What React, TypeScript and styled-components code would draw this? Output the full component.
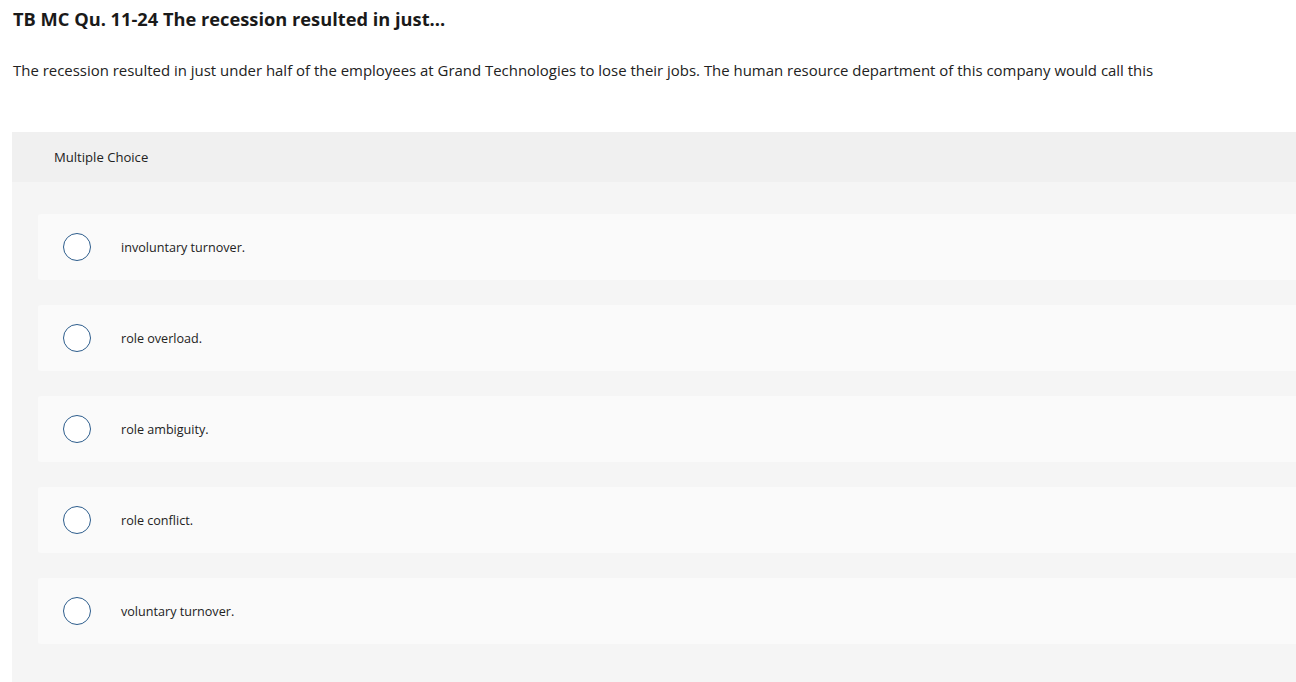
import React from 'react';
import styled, { createGlobalStyle } from 'styled-components';

const GlobalStyle = createGlobalStyle`
  html, body {
    margin: 0;
    padding: 0;
    background: #ffffff;
    overflow: hidden;
  }
  body {
    font-family: "Open Sans", Lato, Arial, sans-serif;
    color: #1e1e1e;
  }
`;

const Page = styled.div`
  width: 1296px;
  height: 682px;
  overflow: hidden;
  padding-left: 12px;
  box-sizing: border-box;
`;

const Title = styled.h1`
  margin: 0;
  padding: 8px 0 0 1px;
  font-size: 18.25px;
  line-height: 22px;
  font-weight: 700;
  color: #1a1a1a;
`;

const Prompt = styled.p`
  margin: 0;
  padding: 30px 0 0 1px;
  font-size: 14.95px;
  line-height: 20px;
  color: #222222;
`;

const Panel = styled.section`
  margin-top: 52px;
  width: 1400px;
`;

const PanelHeader = styled.div`
  height: 50px;
  display: flex;
  align-items: center;
  padding-left: 42px;
  background: #f0f0f0;
  font-size: 13.1px;
  color: #222222;
`;

const ChoiceList = styled.div`
  background: #f5f5f5;
  padding: 32px 0 40px 26px;
  display: flex;
  flex-direction: column;
  gap: 25px;
`;

const Choice = styled.label`
  height: 66px;
  display: flex;
  align-items: center;
  background: #fafafa;
  border-radius: 3px;
  padding-left: 25px;
  cursor: pointer;
`;

const Radio = styled.span`
  width: 28px;
  height: 28px;
  box-sizing: border-box;
  border: 1.5px solid #2d5d8c;
  border-radius: 50%;
  background: #ffffff;
  flex-shrink: 0;
`;

const ChoiceText = styled.span`
  margin-left: 30px;
  font-size: 12.6px;
  color: #222222;
`;

const choices = [
  'involuntary turnover.',
  'role overload.',
  'role ambiguity.',
  'role conflict.',
  'voluntary turnover.',
];

const App = () => {
  return (
    <>
      <GlobalStyle />
      <Page>
        <Title>TB MC Qu. 11-24 The recession resulted in just...</Title>
        <Prompt>
          The recession resulted in just under half of the employees at Grand Technologies to lose their jobs. The human resource department of this company would call this
        </Prompt>
        <Panel>
          <PanelHeader>Multiple Choice</PanelHeader>
          <ChoiceList>
            {choices.map((c) => (
              <Choice key={c}>
                <Radio />
                <ChoiceText>{c}</ChoiceText>
              </Choice>
            ))}
          </ChoiceList>
        </Panel>
      </Page>
    </>
  );
};

export default App;
